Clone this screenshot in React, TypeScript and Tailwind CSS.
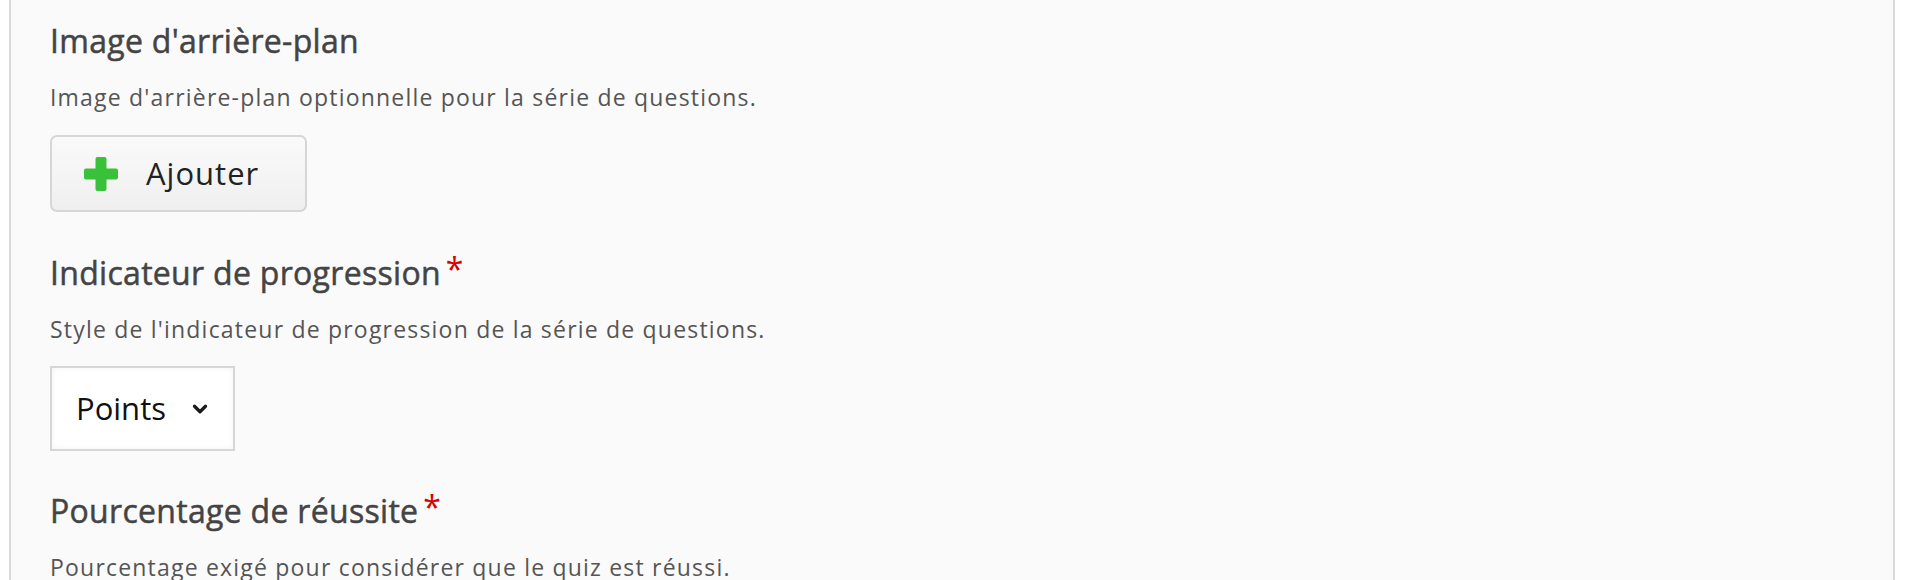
import { ChevronDown } from 'lucide-react';

const font = { fontFamily: '"Open Sans", "Liberation Sans", sans-serif' };

function Label({ text, required }: { text: string; required?: boolean }) {
  return (
    <div className="flex items-start text-[32px] leading-[40px] tracking-[0.3px] text-[#444] [-webkit-text-stroke:0.5px_#444]">
      <span>{text}</span>
      {required && <span className="ml-[5px] text-[32px] leading-none text-[#d80000] [-webkit-text-stroke:0]">*</span>}
    </div>
  );
}

function Description({ text }: { text: string }) {
  return <p className="mt-[20px] text-[23px] leading-[32px] tracking-[1.2px] text-[#555]">{text}</p>;
}

export default function App() {
  return (
    <div className="h-[580px] w-full overflow-hidden bg-white" style={font}>
      <div className="ml-[9px] mr-[25px] h-full border-x-2 border-[#dadada] bg-[#fafafa] pl-[39px] pt-[21px]">
        {/* background image */}
        <Label text="Image d'arrière-plan" />
        <Description text="Image d'arrière-plan optionnelle pour la série de questions." />
        <button className="mt-[22px] flex h-[77px] w-[257px] items-center gap-[28px] rounded-[7px] border-2 border-[#d6d6d6] bg-gradient-to-b from-[#fafafa] to-[#efefef] pl-[32px] text-[31px] tracking-[1px] text-[#222]">
          <svg width="34" height="34" viewBox="0 0 34 34">
            <rect x="11.5" y="0" width="11" height="34" rx="2" fill="#3ac13a" />
            <rect x="0" y="11.5" width="34" height="11" rx="2" fill="#3ac13a" />
          </svg>
          <span>Ajouter</span>
        </button>

        {/* progress indicator */}
        <div className="mt-[41px]">
          <Label text="Indicateur de progression" required />
          <Description text="Style de l'indicateur de progression de la série de questions." />
          <div className="mt-[21px] flex h-[85px] w-[185px] items-center justify-between border-2 border-[#d6d6d6] bg-white pl-[24px] pr-[22px] text-[31px] text-[#111] shadow-[inset_0_0_6px_rgba(0,0,0,0.05)]">
            <span>Points</span>
            <ChevronDown className="h-[22px] w-[22px] text-[#1a1a1a]" strokeWidth={3.5} />
          </div>
        </div>

        {/* pass percentage */}
        <div className="mt-[40px]">
          <Label text="Pourcentage de réussite" required />
          <Description text="Pourcentage exigé pour considérer que le quiz est réussi." />
        </div>
      </div>
    </div>
  );
}
